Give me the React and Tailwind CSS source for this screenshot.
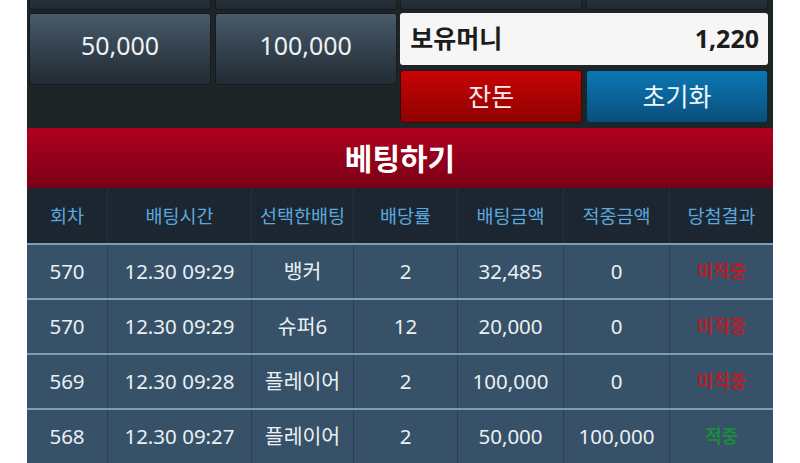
const font = { fontFamily: '"Noto Sans", "Noto Sans CJK KR", sans-serif' };

const cols = 'grid grid-cols-[81px_144px_102px_104px_106px_106px_103px]';

const rows = [
  { no: '570', time: '12.30 09:29', pick: '뱅커', odds: '2', amount: '32,485', win: '0', result: '미적중', hit: false },
  { no: '570', time: '12.30 09:29', pick: '슈퍼6', odds: '12', amount: '20,000', win: '0', result: '미적중', hit: false },
  { no: '569', time: '12.30 09:28', pick: '플레이어', odds: '2', amount: '100,000', win: '0', result: '미적중', hit: false },
  { no: '568', time: '12.30 09:27', pick: '플레이어', odds: '2', amount: '50,000', win: '100,000', result: '적중', hit: true },
];

const headers = ['회차', '배팅시간', '선택한배팅', '배당률', '배팅금액', '적중금액', '당첨결과'];

const ChipButton = ({ label, className = '' }) => (
  <button className={`rounded-[3px] border border-[#161b1f] bg-gradient-to-b from-[#485b6b] to-[#212b33] pb-[6px] text-[25px] text-[#eef2f5] ${className}`}>
    {label}
  </button>
);

export default function App() {
  return (
    <div className="w-[800px] h-[463px] overflow-hidden bg-white" style={font}>
      <div className="ml-[27px] w-[746px] bg-[#1f2427]">
        {/* chip buttons (top row scrolled out of view) */}
        <div className="grid grid-cols-4 gap-x-[3.5px] gap-y-[3px] pl-[2px] pr-[5px] -mt-[62px]">
          <ChipButton className="h-[72px]" />
          <ChipButton className="h-[72px]" />
          <ChipButton className="h-[72px]" />
          <ChipButton className="h-[72px]" />
          <ChipButton label="50,000" className="h-[72px] self-start" />
          <ChipButton label="100,000" className="h-[72px] self-start" />
          <div className="col-span-2 flex flex-col gap-[5px]">
            <div className="h-[52px] rounded-[3px] bg-[#f6f6f6] flex items-center justify-between pl-[10px] pr-[9px] text-[25px] font-bold text-[#1c1c1c]">
              <span>보유머니</span>
              <span>1,220</span>
            </div>
            <div className="grid grid-cols-2 gap-[4px]">
              <button className="h-[53px] rounded-[3px] border border-[#3a0a0a] bg-gradient-to-b from-[#c80404] to-[#8e0202] text-[25px] text-[#fbecec]">잔돈</button>
              <button className="h-[53px] rounded-[3px] border border-[#0a2a3e] bg-gradient-to-b from-[#0a78b4] to-[#0a4f7c] text-[25px] text-[#eef6fb]">초기화</button>
            </div>
          </div>
        </div>

        {/* title bar */}
        <div className="mt-[5px] h-[60px] rounded-t-[3px] bg-gradient-to-b from-[#b0001f] to-[#7a0016] flex items-center justify-center text-[30px] font-bold text-white">
          베팅하기
        </div>

        {/* table */}
        <div className={`${cols} h-[57px] bg-[#1b2631] border-b-2 border-[#7d9db4]`}>
          {headers.map((h) => (
            <div key={h} className="flex items-center justify-center text-[18.5px] text-[#5ba8de] border-r border-[#24323e] last:border-r-0">
              {h}
            </div>
          ))}
        </div>
        {rows.map((r, i) => (
          <div key={i} className={`${cols} h-[55px] bg-[#375268] border-b-2 border-[#7d9db4] text-[20.5px] text-[#eaf0f4]`}>
            <div className="flex items-center justify-center border-r border-[#2a4154]">{r.no}</div>
            <div className="flex items-center justify-center border-r border-[#2a4154]">{r.time}</div>
            <div className="flex items-center justify-center border-r border-[#2a4154]">{r.pick}</div>
            <div className="flex items-center justify-center border-r border-[#2a4154]">{r.odds}</div>
            <div className="flex items-center justify-center border-r border-[#2a4154]">{r.amount}</div>
            <div className="flex items-center justify-center border-r border-[#2a4154]">{r.win}</div>
            <div className={`flex items-center justify-center text-[18px] font-bold ${r.hit ? 'text-[#1e8a3c]' : 'text-[#b3202b]'}`}>{r.result}</div>
          </div>
        ))}
      </div>
    </div>
  );
}
